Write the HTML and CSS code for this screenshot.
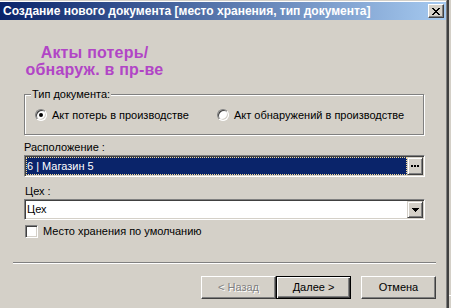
FILE: index.html
```html
<!DOCTYPE html>
<html lang="ru">
<head>
<meta charset="utf-8">
<title>Создание нового документа</title>
<link rel="stylesheet" href="styles.css">
</head>
<body>
<div class="screen">
  <div class="frame">
    <div class="window">
      <div class="titlebar">
        <span class="title">Создание нового документа [место хранения, тип документа]</span>
        <span class="close">
          <svg width="8" height="7" viewBox="0 0 8 7" shape-rendering="crispEdges">
            <path d="M0 0h2v1h-2zM1 1h2v1h-2zM2 2h1v1h-1zM3 2h2v3h-2zM5 2h1v1h-1zM2 4h1v1h-1zM5 4h1v1h-1zM1 5h2v1h-2zM5 5h2v1h-2zM0 6h2v1h-2zM6 6h2v1h-2zM6 0h2v1h-2zM5 1h2v1h-2z" fill="#000"/>
          </svg>
        </span>
      </div>
      <div class="content">
        <div class="heading">Акты потерь/<br>обнаруж. в пр-ве</div>
        <div class="group">
          <span class="legend">Тип документа:</span>
          <div class="radios">
            <label class="radio first"><span class="rb checked"></span>Акт потерь в производстве</label>
            <label class="radio"><span class="rb"></span>Акт обнаружений в производстве</label>
          </div>
        </div>
        <div class="lbl">Расположение :</div>
        <div class="field">
          <div class="value selected"><span class="text">6 | Магазин 5</span></div>
          <span class="sbtn">
            <svg width="8" height="2" viewBox="0 0 8 2" shape-rendering="crispEdges"><path d="M0 0h2v2h-2zM3 0h2v2h-2zM6 0h2v2h-2z" fill="#000"/></svg>
          </span>
        </div>
        <div class="lbl lbl2">Цех :</div>
        <div class="field combo">
          <div class="value"><span class="text">Цех</span></div>
          <span class="sbtn">
            <svg width="7" height="4" viewBox="0 0 7 4" shape-rendering="crispEdges"><path d="M0 0h7v1h-1v1h-1v1h-1v1h-1v-1h-1v-1h-1v-1h-1z" fill="#000"/></svg>
          </span>
        </div>
        <label class="check"><span class="cb"></span>Место хранения по умолчанию</label>
        <div class="separator"></div>
        <div class="buttons">
          <span class="btn disabled">&lt; Назад</span>
          <span class="btn default">Далее &gt;</span>
          <span class="btn">Отмена</span>
        </div>
      </div>
    </div>
  </div>
  <div class="behind"><div class="behind-line"></div></div>
</div>
</body>
</html>
```
FILE: styles.css
```css
html, body {
  margin: 0;
  padding: 0;
}
body {
  width: 451px;
  height: 308px;
  overflow: hidden;
  background: #d4d0c8;
  font-family: "Liberation Sans", Arial, sans-serif;
  font-size: 11px;
  line-height: 13px;
  color: #000;
}
.screen {
  display: flex;
  height: 308px;
}
.frame {
  border-right: 2px solid #404040;
}
.window {
  width: 446px;
  height: 308px;
  border-right: 1px solid #808080;
  border-top: 1px solid #d4d0c8;
  box-sizing: content-box;
}
.titlebar {
  display: flex;
  align-items: center;
  justify-content: space-between;
  height: 18px;
  border-top: 1px solid #fff;
  background: linear-gradient(to right, #0a246a, #a6caf0);
  padding: 0 2px 0 3px;
}
.title {
  color: #fff;
  font-weight: bold;
  font-size: 12px;
  line-height: 18px;
  white-space: nowrap;
}
.close {
  display: flex;
  align-items: center;
  justify-content: center;
  width: 16px;
  height: 14px;
  box-sizing: border-box;
  background: #d4d0c8;
  border: 1px solid;
  border-color: #fff #404040 #404040 #fff;
  box-shadow: inset -1px -1px 0 #808080;
}
.content {
  padding-left: 24px;
}
.heading {
  margin: 24px 0 0 -24px;
  width: 189px;
  text-align: center;
  font-weight: bold;
  font-size: 16px;
  line-height: 17px;
  letter-spacing: 0.2px;
  color: #b145c6;
}
.group {
  position: relative;
  margin-top: 16px;
  width: 400px;
  height: 41px;
  box-sizing: border-box;
  border: 1px solid #808080;
  box-shadow: inset 1px 1px 0 #fff, 1px 1px 0 #fff;
  padding: 14px 0 0 10px;
}
.legend {
  position: absolute;
  top: -7px;
  left: 6px;
  padding: 0 1px;
  background: #d4d0c8;
}
.radios {
  display: flex;
  align-items: center;
  height: 12px;
}
.radio {
  display: flex;
  align-items: center;
  gap: 5px;
  white-space: nowrap;
}
.radio.first {
  width: 182px;
}
.rb {
  position: relative;
  width: 12px;
  height: 12px;
  box-sizing: border-box;
  border-radius: 50%;
  border: 1px solid;
  border-color: #808080 #fff #fff #808080;
  box-shadow: inset 1px 1px 0 #404040, inset -1px -1px 0 #d4d0c8;
  background: #fff;
}
.rb.checked::after {
  content: "";
  position: absolute;
  left: 3px;
  top: 3px;
  width: 4px;
  height: 4px;
  border-radius: 50%;
  background: #000;
}
.lbl {
  margin-top: 6px;
  height: 13px;
}
.lbl2 {
  margin-top: 8px;
  padding-left: 1px;
}
.field {
  display: flex;
  margin-top: 1px;
  width: 401px;
  height: 22px;
  box-sizing: border-box;
  padding: 1px;
  border: 1px solid;
  border-color: #808080 #fff #fff #808080;
  box-shadow: inset 1px 1px 0 #404040, inset -1px -1px 0 #d4d0c8;
}
.field.combo {
  height: 21px;
  background: #fff;
}
.value {
  flex: 1;
  display: flex;
  align-items: center;
  padding-left: 1px;
  box-sizing: border-box;
}
.value.selected {
  background: #0a246a;
  color: #fff;
  outline: 1px dotted #f5db95;
  outline-offset: -1px;
}
.sbtn {
  display: flex;
  align-items: center;
  justify-content: center;
  width: 16px;
  box-sizing: border-box;
  background: #d4d0c8;
  border: 1px solid;
  border-color: #d4d0c8 #404040 #404040 #d4d0c8;
  box-shadow: inset 1px 1px 0 #fff, inset -1px -1px 0 #808080;
}
.check {
  display: flex;
  align-items: center;
  gap: 5px;
  margin-top: 5px;
  height: 13px;
  padding-left: 1px;
}
.cb {
  width: 13px;
  height: 13px;
  box-sizing: border-box;
  border: 1px solid;
  border-color: #808080 #fff #fff #808080;
  box-shadow: inset 1px 1px 0 #404040, inset -1px -1px 0 #d4d0c8;
  background: #fff;
}
.separator {
  margin: 24px 0 0 -11px;
  width: 423px;
  height: 0;
  border-top: 1px solid #808080;
  border-bottom: 1px solid #fff;
}
.buttons {
  display: flex;
  justify-content: flex-end;
  margin: 12px 0 0 -24px;
  padding-right: 10px;
}
.btn {
  display: flex;
  align-items: center;
  justify-content: center;
  width: 75px;
  height: 23px;
  box-sizing: border-box;
  border: 1px solid;
  border-color: #fff #404040 #404040 #fff;
  box-shadow: inset -1px -1px 0 #808080;
  background: #d4d0c8;
}
.btn.default {
  border: 1px solid #000;
  box-shadow: inset 1px 1px 0 #fff, inset -1px -1px 0 #404040, inset -2px -2px 0 #808080;
  margin-right: 10px;
}
.btn.disabled {
  color: #808080;
  text-shadow: 1px 1px 0 #fff;
}
.behind {
  flex: 1;
}
.behind-line {
  margin-top: 295px;
  height: 1px;
  background: #fff;
}
```
